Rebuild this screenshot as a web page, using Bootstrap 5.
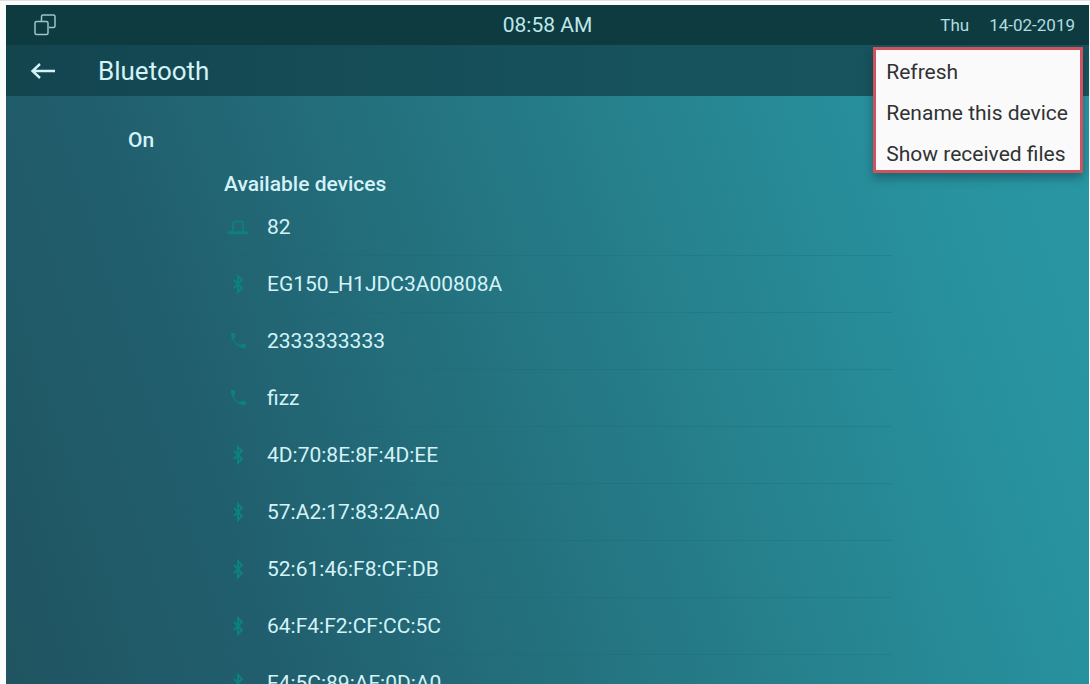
<!DOCTYPE html>
<html lang="en">
<head>
<meta charset="utf-8">
<meta name="viewport" content="width=device-width, initial-scale=1">
<title>Bluetooth</title>
<link href="https://cdn.jsdelivr.net/npm/bootstrap@5.3.0/dist/css/bootstrap.min.css" rel="stylesheet">
<style>
  body { font-family: Roboto, sans-serif; font-size: 21px; line-height: 24px; color: #d3f3f8; background: #fbfdfd; border-top: 1px solid #e2dfe1; padding: 4px 1px 0 6px; }
  .screen { background: linear-gradient(72deg, #205461 0%, #215f6e 22%, #24717e 43%, #26838f 64%, #28919e 83%, #2a98a5 100%); }
  .status-bar { height: 40px; background: #0d3b40; padding: 0 14px; }
  .status-bar > * { flex: 1 1 0; }
  .windows svg { margin-left: 14px; }
  .clock { color: #bfe6ea; }
  .date { font-size: 17px; color: #b2dce0; gap: 20px; }
  .title-bar { height: 51px; background: linear-gradient(90deg, #13454f, #17535d 60%, #18545d); padding: 0 24px; gap: 40px; }
  .title-bar h1 { font-size: 26px; line-height: 28px; font-weight: 400; }
  .back { width: 28px; height: 28px; color: #d3f3f8; }
  .switch-label { font-weight: 500; padding: 32px 0 20px 122px; }
  .devices { width: 64%; margin-left: 193px; }
  .devices h2 { font-size: 21px; line-height: 24px; font-weight: 500; padding-left: 25px; margin-bottom: 3px; }
  .device { height: 57px; padding: 0 0 0 28px; gap: 18px; border-bottom: 1px solid rgba(18, 104, 116, .25); color: inherit; }
  .device svg { width: 22px; height: 22px; color: #0c827e; }
  .options { position: absolute; top: 47px; right: 7px; background: #fafafa; border: 3px solid #d0525e; padding-top: 6px; gap: 9px; box-shadow: 0 5px 9px rgba(0, 40, 50, .4); }
  .options button { color: #303234; padding: 4px 12px 4px 10px; text-align: left; font-size: 21px; line-height: 24px; }
</style>
</head>
<body class="vh-100 overflow-hidden">
<svg class="d-none">
  <symbol id="laptop" viewBox="0 0 22 22"><path d="M6 15V6.500Q6 5.500 7 5.500h8q1 0 1 1V15M2 16h18v1.500H2z" fill="none" stroke="currentColor" stroke-width="1.500"/></symbol>
  <symbol id="bluetooth" viewBox="0 0 22 22"><path d="M7 7l8 8-4 4V3l4 4-8 8" fill="none" stroke="currentColor" stroke-width="2"/></symbol>
  <symbol id="phone" viewBox="0 0 22 22"><path d="M4 3h3.500l1 4-2.200 2.200a14 14 0 0 0 6.500 6.300L15 13.500l4 1V18q-5.500.8-10-3.800Q3.500 9 4 3z" fill="currentColor"/></symbol>
</svg>
<div class="screen position-relative h-100 d-flex flex-column overflow-hidden">
  <header class="status-bar d-flex align-items-center flex-shrink-0">
    <div class="windows d-flex"><svg width="22" height="22" viewBox="0 0 22 22" fill="none" stroke="#9dc5c8" stroke-width="1.500"><rect x="1" y="7.500" width="13" height="13" rx="1.500"/><path d="M7.500 7V2.500Q7.500 1 9 1h10.500Q21 1 21 2.500V12q0 1.500-1.500 1.500H15"/></svg></div>
    <time class="clock text-center">08:58 AM</time>
    <div class="date d-flex justify-content-end"><span>Thu</span><span>14-02-2019</span></div>
  </header>
  <div class="title-bar d-flex align-items-center flex-shrink-0">
    <button type="button" class="back btn p-0 border-0 d-flex" aria-label="Back"><svg width="28" height="28" viewBox="0 0 28 28" fill="none" stroke="currentColor" stroke-width="2.400"><path d="M25 14H2M10 7l-7.500 7 7.500 7"/></svg></button>
    <h1 class="mb-0">Bluetooth</h1>
  </div>
  <main>
    <div class="switch-label">On</div>
    <section class="devices">
      <h2>Available devices</h2>
      <div class="d-flex flex-column">
        <a href="#" class="device d-flex align-items-center text-decoration-none"><svg><use href="#laptop"/></svg>82</a>
        <a href="#" class="device d-flex align-items-center text-decoration-none"><svg><use href="#bluetooth"/></svg>EG150_H1JDC3A00808A</a>
        <a href="#" class="device d-flex align-items-center text-decoration-none"><svg><use href="#phone"/></svg>2333333333</a>
        <a href="#" class="device d-flex align-items-center text-decoration-none"><svg><use href="#phone"/></svg>fizz</a>
        <a href="#" class="device d-flex align-items-center text-decoration-none"><svg><use href="#bluetooth"/></svg>4D:70:8E:8F:4D:EE</a>
        <a href="#" class="device d-flex align-items-center text-decoration-none"><svg><use href="#bluetooth"/></svg>57:A2:17:83:2A:A0</a>
        <a href="#" class="device d-flex align-items-center text-decoration-none"><svg><use href="#bluetooth"/></svg>52:61:46:F8:CF:DB</a>
        <a href="#" class="device d-flex align-items-center text-decoration-none"><svg><use href="#bluetooth"/></svg>64:F4:F2:CF:CC:5C</a>
        <a href="#" class="device d-flex align-items-center text-decoration-none"><svg><use href="#bluetooth"/></svg>F4:5C:89:AF:0D:A0</a>
      </div>
    </section>
  </main>
</div>
<div class="options d-flex flex-column" role="menu">
  <button type="button" role="menuitem" class="btn border-0 rounded-0">Refresh</button>
  <button type="button" role="menuitem" class="btn border-0 rounded-0">Rename this device</button>
  <button type="button" role="menuitem" class="btn border-0 rounded-0">Show received files</button>
</div>
<script src="https://cdn.jsdelivr.net/npm/bootstrap@5.3.0/dist/js/bootstrap.bundle.min.js"></script>
</body>
</html>
